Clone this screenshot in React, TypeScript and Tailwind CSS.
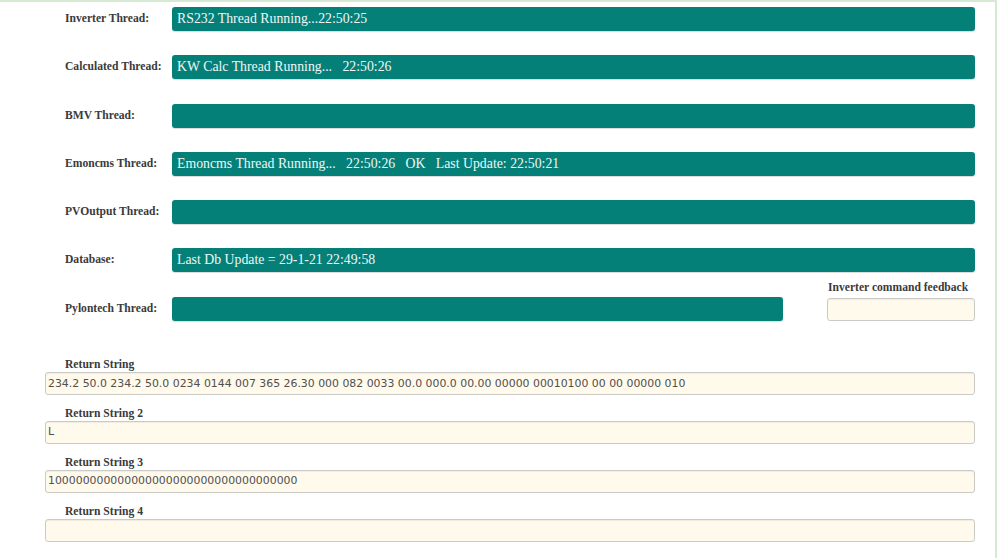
import React from 'react';

const threads = [
    { label: 'Inverter Thread:', text: 'RS232 Thread Running...22:50:25' },
    { label: 'Calculated Thread:', text: 'KW Calc Thread Running...   22:50:26' },
    { label: 'BMV Thread:', text: '' },
    { label: 'Emoncms Thread:', text: 'Emoncms Thread Running...   22:50:26   OK   Last Update: 22:50:21' },
    { label: 'PVOutput Thread:', text: '' },
    { label: 'Database:', text: 'Last Db Update = 29-1-21 22:49:58' },
];

const returns = [
    { label: 'Return String', value: '234.2 50.0 234.2 50.0 0234 0144 007 365 26.30 000 082 0033 00.0 000.0 00.00 00000 00010100 00 00 00000 010' },
    { label: 'Return String 2', value: 'L' },
    { label: 'Return String 3', value: '100000000000000000000000000000000000' },
    { label: 'Return String 4', value: '' },
];

const serif = { fontFamily: '"Liberation Serif", "Times New Roman", serif' };

function Label({ children, className = '' }: { children: React.ReactNode; className?: string }) {
    return (
        <div className={`text-[11.6px] font-bold text-[#3a3a3a] leading-[14px] ${className}`} style={serif}>
            {children}
        </div>
    );
}

function Bar({ text, className = '' }: { text: string; className?: string }) {
    return (
        <div
            className={`h-[24px] bg-[#058079] rounded-[3px] shadow-[0_1px_1px_rgba(0,0,0,0.15)] flex items-center pl-[5px] text-[13.8px] text-[#eef7f6] whitespace-pre ${className}`}
            style={serif}
        >
            {text}
        </div>
    );
}

function Field({ value, className = '' }: { value: string; className?: string }) {
    return (
        <div
            className={`h-[23px] bg-[#fffaec] border border-[#cacac6] rounded-[3px] shadow-[inset_0_1px_1px_rgba(0,0,0,0.06)] flex items-center pl-[2px] text-[10.9px] text-[#505050] whitespace-pre ${className}`}
            style={{ fontFamily: '"DejaVu Sans", sans-serif' }}
        >
            {value}
        </div>
    );
}

export default function App() {
    return (
        <div className="w-[1000px] h-[558px] bg-white overflow-hidden">
            <div className="w-[997px] h-[558px] border-t-2 border-r-2 border-[#d6ead3] pt-[5px] pr-[20px]">
                {/* thread status rows */}
                <div className="flex flex-col gap-[24.3px]">
                    {threads.map(t => (
                        <div key={t.label} className="flex items-center">
                            <Label className="w-[172px] pl-[65px] shrink-0">{t.label}</Label>
                            <Bar text={t.text} className="flex-1" />
                        </div>
                    ))}
                </div>

                {/* pylontech + feedback */}
                <div className="flex items-end mt-[9px]">
                    <div className="flex items-center">
                        <Label className="w-[172px] pl-[65px] shrink-0">Pylontech Thread:</Label>
                        <Bar text="" className="w-[611px]" />
                    </div>
                    <div className="ml-[44px] w-[148px] flex flex-col">
                        <Label className="pl-[1px] mb-[3px]">Inverter command feedback</Label>
                        <Field value="" />
                    </div>
                </div>

                {/* return strings */}
                <div className="flex flex-col gap-[11.7px] mt-[37px] pl-[45px]">
                    {returns.map(r => (
                        <div key={r.label} className="flex flex-col">
                            <Label className="pl-[20px]">{r.label}</Label>
                            <Field value={r.value} />
                        </div>
                    ))}
                </div>
            </div>
        </div>
    );
}
